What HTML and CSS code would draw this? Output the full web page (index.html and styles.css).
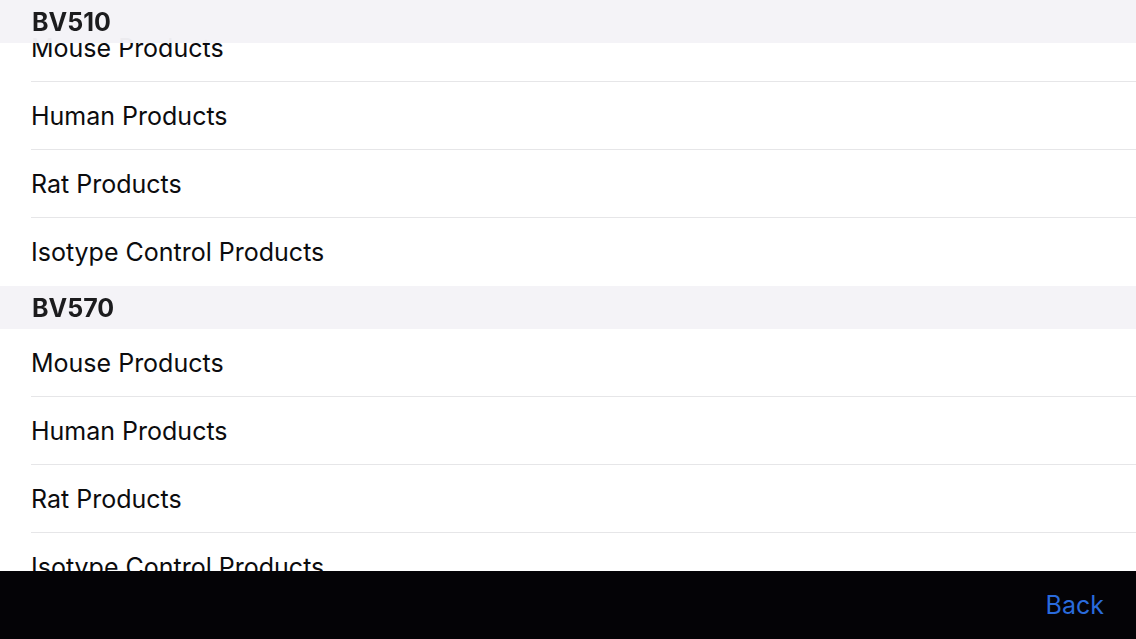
FILE: index.html
```html
<!DOCTYPE html>
<html lang="en">
<head>
<meta charset="utf-8">
<title>Products</title>
<link rel="stylesheet" href="styles.css">
</head>
<body>
<div class="screen">
  <div class="list">
    <div class="scroll">
      <section class="section first">
        <h2 class="section-header">BV510</h2>
        <ul class="rows">
          <li class="row">Mouse Products</li>
          <li class="row">Human Products</li>
          <li class="row">Rat Products</li>
          <li class="row">Isotype Control Products</li>
        </ul>
      </section>
      <section class="section">
        <h2 class="section-header">BV570</h2>
        <ul class="rows">
          <li class="row">Mouse Products</li>
          <li class="row">Human Products</li>
          <li class="row">Rat Products</li>
          <li class="row">Isotype Control Products</li>
        </ul>
      </section>
    </div>
  </div>
  <footer class="toolbar">
    <button class="back">Back</button>
  </footer>
</div>
</body>
</html>
```

FILE: styles.css
```css
* { box-sizing: border-box; }
html, body {
  margin: 0;
  padding: 0;
  background: #ffffff;
}
body {
  font-family: "Inter", "Liberation Sans", sans-serif;
  color: #0c0c0e;
}
.screen {
  width: 1136px;
  height: 639px;
  display: flex;
  flex-direction: column;
  overflow: hidden;
}
.list {
  flex: 1;
  overflow: hidden;
  background: #ffffff;
}
.scroll {
  margin-top: -29px;
}
.section-header {
  position: sticky;
  top: 0;
  z-index: 2;
  margin: 0;
  height: 43px;
  padding-left: 32px;
  display: flex;
  align-items: center;
  padding-top: 1px;
  background: rgba(244, 243, 247, 0.97);
  font-size: 25px;
  font-weight: 700;
  color: #1c1c1e;
}
.rows {
  list-style: none;
  margin: 0;
  padding: 0;
}
.row {
  height: 68px;
  margin-left: 31px;
  display: flex;
  align-items: center;
  font-size: 25px;
  border-bottom: 1px solid #e6e6e8;
}
.row:last-child {
  border-bottom: none;
}
.toolbar {
  height: 68px;
  flex: none;
  background: #040306;
  display: flex;
  align-items: center;
  justify-content: flex-end;
  padding-right: 32px;
}
.back {
  background: none;
  border: none;
  padding: 0;
  font-family: "Inter", "Liberation Sans", sans-serif;
  font-size: 25px;
  color: #2a6bdc;
  cursor: pointer;
}
```
